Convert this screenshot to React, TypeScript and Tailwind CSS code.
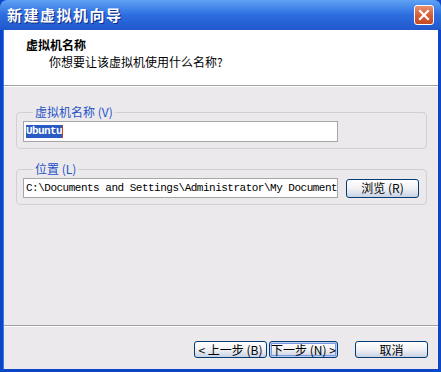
import React from 'react';

const cjk = { fontFamily: '"SimSun", "Noto Sans CJK SC", sans-serif' };
const mono = { fontFamily: '"Liberation Mono", "Courier New", monospace' };

function XpButton({
  children,
  width,
  height = 'h-[17px]',
  isDefault = false,
}: {
  children: React.ReactNode;
  width: string;
  height?: string;
  isDefault?: boolean;
}) {
  return (
    <button
      className={`${width} ${height} flex items-center justify-center rounded-[3px] border border-[#003c74] bg-gradient-to-b from-white via-[#f1f1f4] to-[#c8d2e4] text-[12px] leading-none text-black ${
        isDefault ? 'shadow-[inset_0_0_0_1px_#b8cdf7,inset_0_0_0_2px_#7a9ae0]' : ''
      }`}
      style={cjk}
    >
      {children}
    </button>
  );
}

function GroupBox({ label, children }: { label: React.ReactNode; children: React.ReactNode }) {
  return (
    <fieldset className="ml-[12px] mr-[11px] rounded-[4px] border border-[#d2d0d6] px-[6px] pb-[6px] pt-[1px]">
      <legend className="ml-[10px] px-[2px] text-[12px] leading-[14px] text-[#1f53c4]" style={cjk}>
        {label}
      </legend>
      {children}
    </fieldset>
  );
}

export default function App() {
  return (
    <div className="w-[441px] h-[372px] flex flex-col overflow-hidden bg-[#0b45c8]">
      {/* title bar */}
      <div className="h-[30px] flex items-center justify-between rounded-t-[7px] bg-gradient-to-b from-[#5fa2f4] via-[#2d6de0] to-[#2058cc] pl-[7px] pr-[7px]">
        <span
          className="text-[15px] font-bold tracking-[1.5px] text-white [text-shadow:1px_1px_0_#0a2a88]"
          style={cjk}
        >
          新建虚拟机向导
        </span>
        <div className="w-[20px] h-[20px] rounded-[3px] border border-white bg-gradient-to-b from-[#e8906f] via-[#d5603b] to-[#c24a25] flex items-center justify-center">
          <svg width="12" height="12" viewBox="0 0 12 12">
            <path d="M2 2 L10 10 M10 2 L2 10" stroke="white" strokeWidth="2.2" strokeLinecap="square" />
          </svg>
        </div>
      </div>

      {/* body */}
      <div className="flex-1 flex flex-col mx-[3px] mb-[3px] bg-[#ece9ed] border-l border-[#3b7be8]">
        <div className="h-[55px] bg-white pt-[7px]">
          <div className="pl-[22px] text-[12px] font-bold leading-[16px] text-black" style={cjk}>
            虚拟机名称
          </div>
          <div className="mt-px pl-[45px] text-[12px] leading-[16px] text-black" style={cjk}>
            你想要让该虚拟机使用什么名称?
          </div>
        </div>
        <div className="h-px bg-[#a0a0a0]" />
        <div className="h-px bg-white" />

        <div className="flex-1 flex flex-col pt-[18px] gap-[13px]">
          <GroupBox label="虚拟机名称 (V)">
            <div className="mt-[1px] w-[315px] h-[21px] border border-[#a6a6a6] bg-white flex items-center pl-[2px]">
              <span
                className="bg-[#2a5ac4] text-white text-[11px] font-bold tracking-[-0.6px] leading-[13px]"
                style={mono}
              >
                Ubuntu
              </span>
              <span className="w-px h-[13px] bg-[#c04020]" />
            </div>
          </GroupBox>
          <GroupBox label="位置 (L)">
            <div className="mt-[1px] flex items-center gap-[8px]">
              <div className="w-[315px] h-[20px] border border-[#a6a6a6] bg-white flex items-center pl-[2px] overflow-hidden whitespace-nowrap">
                <span className="text-[11px] tracking-[-0.5px] text-black leading-none" style={mono}>
                  C:\Documents and Settings\Administrator\My Documents
                </span>
              </div>
              <XpButton width="w-[73px]" height="h-[19px]">
                浏览 (R)
              </XpButton>
            </div>
          </GroupBox>
        </div>

        <div className="h-px bg-[#a0a0a0]" />
        <div className="h-px bg-white" />
        <div className="h-[42px] flex items-start justify-end pt-[14px] pr-[10px]">
          <XpButton width="w-[73px]">&lt; 上一步 (B)</XpButton>
          <div className="w-[2px]" />
          <XpButton width="w-[69px]" isDefault>
            下一步 (N) &gt;
          </XpButton>
          <div className="w-[17px]" />
          <XpButton width="w-[73px]">取消</XpButton>
        </div>
      </div>
    </div>
  );
}
